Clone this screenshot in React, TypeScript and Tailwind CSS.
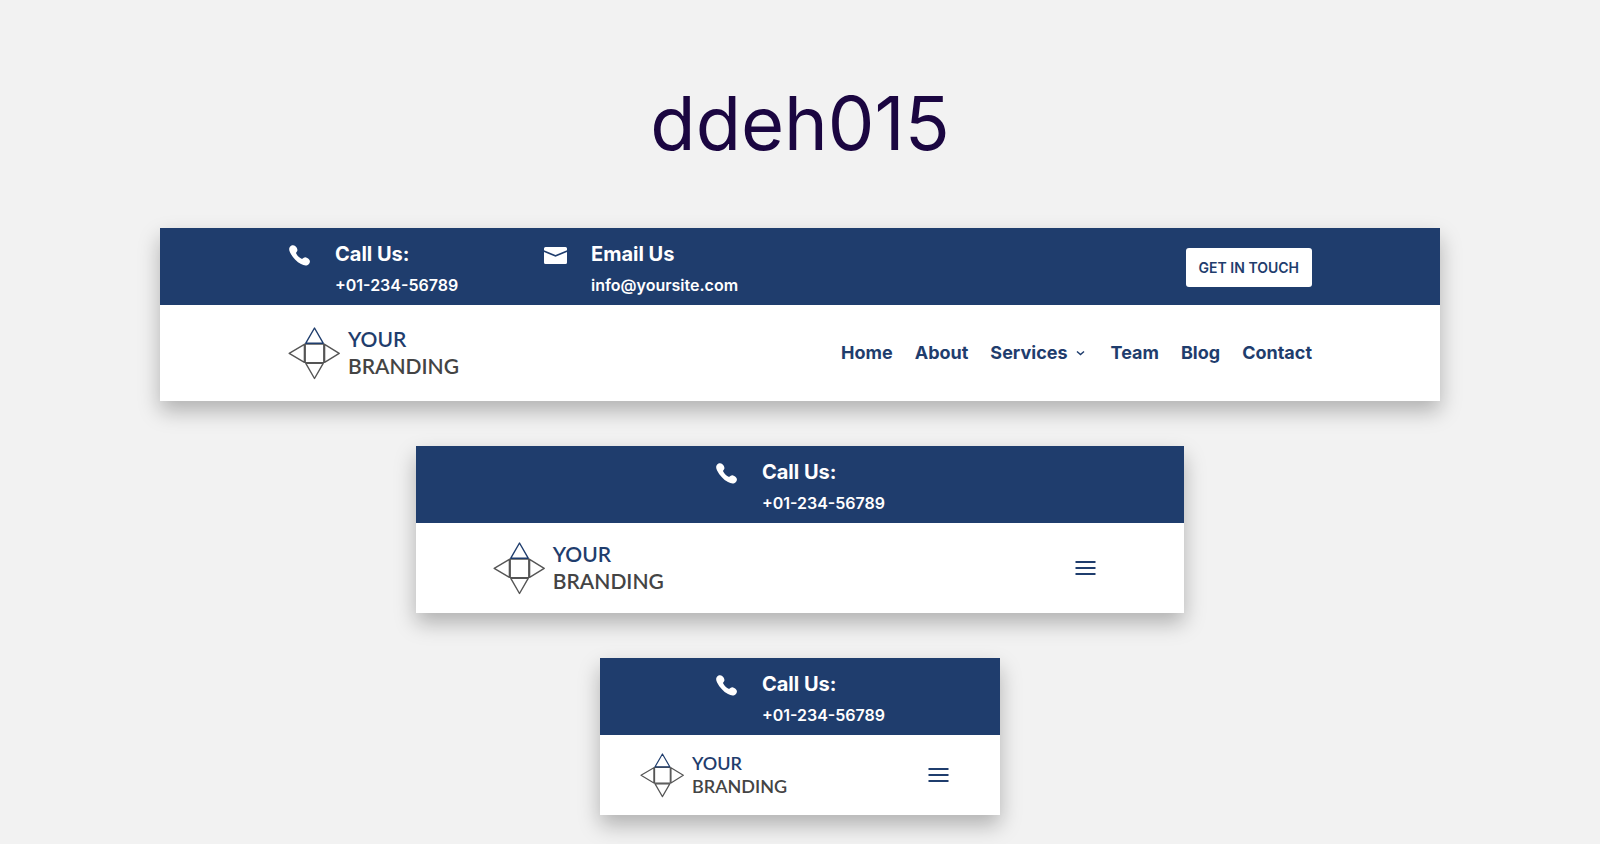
import React from 'react';

function PhoneIcon() {
  return (
    <svg className="h-[22px] w-[23px]" viewBox="-1 -1 23 22" fill="currentColor" aria-hidden="true">
      <path d="M1.200 1.400C2.500 0 4.700-.4 6.200 1 7.900 2.500 9 4.500 8.100 6.300 7.600 7.300 6.800 7.600 7.200 8.500 8.200 10.600 10.200 12.600 12.500 13.700c1 .4 1.700-1 3.100-1.300 1.600-.3 3.100 .7 4.500 2.200 1.400 1.400 .9 3.300-.4 4.700-1.800 1.800-4.700 1.500-7.700-.2C7.400 16.600 3.400 12.200 1.100 7.500-.1 5-.3 3 1.200 1.400z" />
    </svg>
  );
}

function MailIcon() {
  return (
    <svg className="h-[22px] w-[23px]" viewBox="0 0 23 22" fill="currentColor" aria-hidden="true">
      <path d="M1.500 3h20A1.500 1.500 0 0 1 23 4.500V6.200L11.500 11 0 6.200V4.500A1.500 1.500 0 0 1 1.500 3z" />
      <path d="M0 8 11.500 12.800 23 8V18.500A1.500 1.500 0 0 1 21.500 20h-20A1.500 1.500 0 0 1 0 18.500z" />
    </svg>
  );
}

function Contact({ icon, title, children }: { icon: React.ReactNode; title: string; children: React.ReactNode }) {
  return (
    <div className="flex pt-4 text-white">
      <span className="w-[47px] shrink-0">{icon}</span>
      <div className="whitespace-nowrap">
        <h2 className="text-[20px] leading-5 font-bold">{title}</h2>
        <div className="mt-3 text-[16px] leading-[18px] font-semibold">{children}</div>
      </div>
    </div>
  );
}

function CallUs() {
  return (
    <Contact icon={<PhoneIcon />} title="Call Us:">
      <a href="tel:+0123456789">+01-234-56789</a>
    </Contact>
  );
}

function Logo({ small = false }: { small?: boolean }) {
  return (
    <a
      href="#home"
      className={
        small
          ? 'flex items-center gap-2 font-[Lato,sans-serif] text-[18px] leading-[23px]'
          : 'flex items-center gap-2 font-[Lato,sans-serif] text-[21px] leading-[27px]'
      }
    >
      <svg
        className={small ? 'h-[45px] w-11' : 'h-[53px] w-[52px]'}
        viewBox="0 0 52 53"
        fill="none"
        stroke="#555"
        strokeWidth="1.400"
        strokeLinejoin="round"
        aria-hidden="true"
      >
        <path d="M17.200 17h18.600v18.600H17.200z" />
        <path d="M16.400 17.300 1.200 26.300 16.400 35.300z" />
        <path d="M36.600 17.300 51.200 26.300 36.600 35.300z" />
        <path d="M17.800 36.400 26.500 51.500 35.200 36.400z" />
        <path d="M17.800 16.200 26.500 1 35.200 16.200z" stroke="#1f3d6d" />
      </svg>
      <span className={small ? 'font-semibold text-[#444]' : 'pb-[2px] font-semibold text-[#444]'}>
        <span className="block text-[#1f3d6d]">YOUR</span>
        <span className="block">BRANDING</span>
      </span>
    </a>
  );
}

function MenuButton() {
  return (
    <button type="button" aria-label="Open menu" className="px-[11px] py-2 text-[#1f3d6d]">
      <svg className="h-[14px] w-[21px]" viewBox="0 0 21 14" fill="currentColor" aria-hidden="true">
        <path d="M.500 0h20v2H.500zM.500 6h20v2H.500zM.500 12h20v2H.500z" />
      </svg>
    </button>
  );
}

const links = ['Home', 'About', 'Services', 'Team', 'Blog', 'Contact'];

export default function App() {
  return (
    <main className="flex min-h-screen flex-col items-center gap-[45px] bg-[#f2f2f2] pt-[81px] pb-[29px] font-[Inter,sans-serif]">
      <h1 className="mb-[18px] text-[74px] leading-[84px] text-[#1b0641]">ddeh015</h1>

      <header className="w-4/5 shadow-[0_10px_20px_rgba(0,0,0,0.27)]">
        <div className="grid h-[77px] grid-cols-4 bg-[#1f3d6d] px-[10%]">
          <CallUs />
          <Contact icon={<MailIcon />} title="Email Us">
            <a href="mailto:info@yoursite.com">info@yoursite.com</a>
          </Contact>
          <div className="col-span-2 flex items-start justify-end pt-5">
            <button
              type="button"
              className="rounded-[3px] bg-white px-[13px] py-[10px] text-[14px] leading-[19px] font-semibold whitespace-nowrap text-[#1f3d6d]"
            >
              GET IN TOUCH
            </button>
          </div>
        </div>
        <div className="flex h-24 items-center justify-between bg-white px-[10%]">
          <Logo />
          <nav className="flex gap-[22px] text-[18px] leading-[20px] font-bold text-[#1f3d6d]">
            {links.map((label) => (
              <a key={label} href={`#${label.toLowerCase()}`} className="flex items-center gap-2">
                {label}
                {label === 'Services' && (
                  <svg className="mr-1 h-[6px] w-[9px]" viewBox="0 0 9 6" fill="none" stroke="currentColor" strokeWidth="1.500" aria-hidden="true">
                    <path d="M1 1.500l3.500 3L8 1.500" />
                  </svg>
                )}
              </a>
            ))}
          </nav>
        </div>
      </header>

      <header className="w-[48%] shadow-[0_10px_20px_rgba(0,0,0,0.27)]">
        <div className="flex h-[77px] justify-center bg-[#1f3d6d]">
          <CallUs />
        </div>
        <div className="flex h-[90px] items-center justify-between bg-white px-[10%]">
          <Logo />
          <MenuButton />
        </div>
      </header>

      <header className="w-1/4 shadow-[0_10px_20px_rgba(0,0,0,0.27)]">
        <div className="flex h-[77px] justify-center bg-[#1f3d6d]">
          <CallUs />
        </div>
        <div className="flex h-20 items-center justify-between bg-white px-[10%]">
          <Logo small />
          <MenuButton />
        </div>
      </header>
    </main>
  );
}
